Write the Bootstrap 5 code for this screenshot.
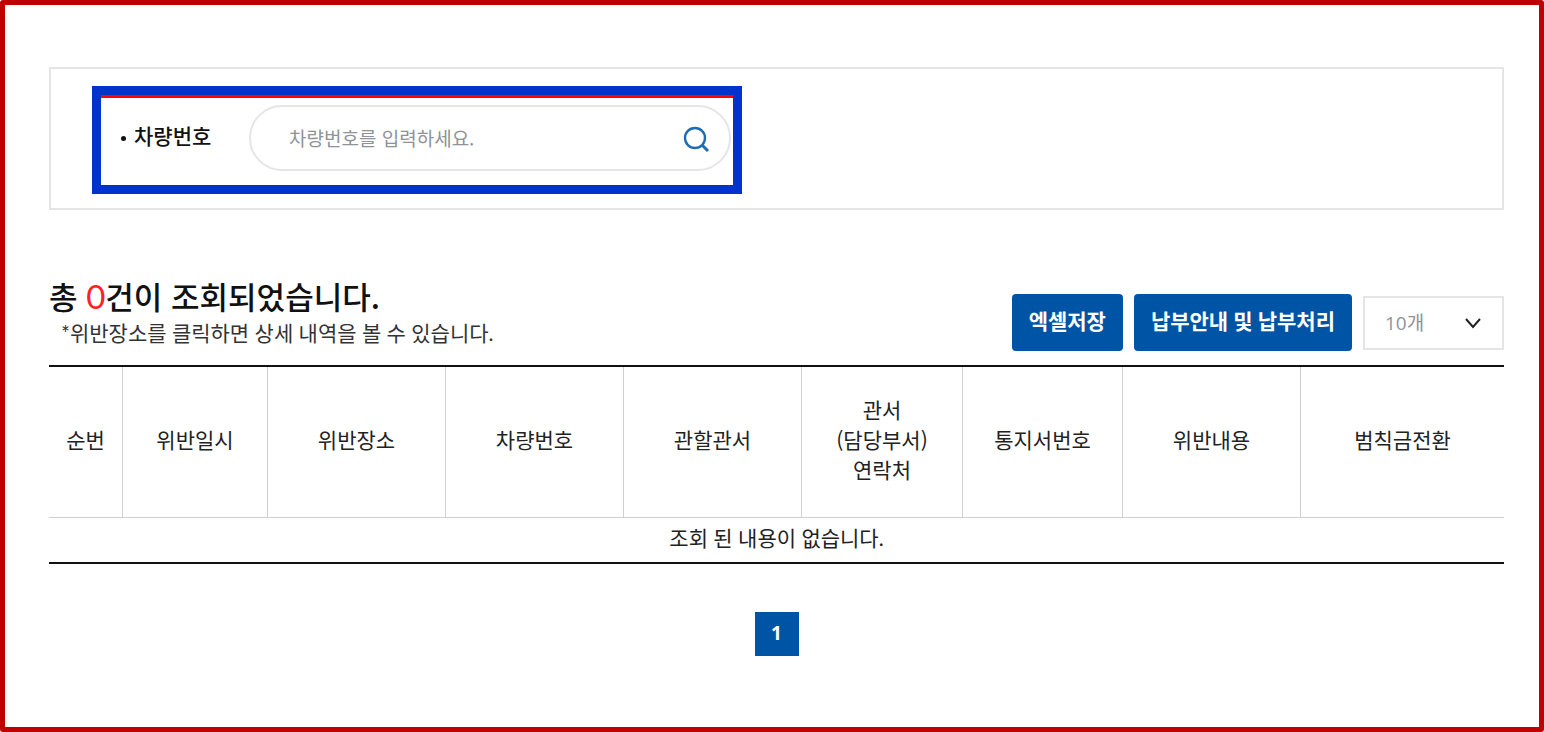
<!DOCTYPE html>
<html lang="ko">
<head>
<meta charset="utf-8">
<meta name="viewport" content="width=device-width, initial-scale=1">
<title>차량번호 조회</title>
<link href="https://cdn.jsdelivr.net/npm/bootstrap@5.3.0/dist/css/bootstrap.min.css" rel="stylesheet">
<style>
  body { font-family: "Noto Sans CJK KR", sans-serif; font-size: 21px; line-height: 30px; color: #222; }
  .page-frame { border: 5px solid #c00000; border-radius: 3px; padding: 62px 35px 40px 44px; }
  .search-panel { border: 2px solid #e5e5e5; padding: 17px 41px 14px; }
  .search-focus { border: 9px solid #0033cc; width: 650px; max-width: 100%; }
  .search-form { border-top: 3px solid #f00; padding: 7px 2px 14px 19px; }
  .search-label { width: 129px; font-weight: 500; color: #111; padding-bottom: 6px; }
  .dot { width: 5px; height: 5px; margin: 6px 8px 0 1px; background: #111; }
  .search-pill { border: 2px solid #e5e5e5; height: 66px; padding: 0 19px 0 38px; }
  .search-pill .form-control { font-size: 19px; color: #333; }
  .search-pill .form-control::placeholder { color: #8f9297; opacity: 1; }
  .search-pill svg { width: 28px; height: 28px; }
  .result-bar { margin-top: 66px; padding-bottom: 14px; }
  .result-text { padding-bottom: 1px; }
  .result-title { font-size: 31px; line-height: 40px; color: #111; }
  .result-count { font-family: Lato, sans-serif; font-size: 33px; line-height: 40px; font-weight: 400; color: #f22; }
  .result-note { font-family: Lato, "Noto Sans CJK KR", sans-serif; padding-left: 12px; line-height: 34px; color: #333; }
  .btn-main { --bs-btn-color: #fff; --bs-btn-bg: #0054a6; --bs-btn-hover-color: #fff; --bs-btn-hover-bg: #00468c;
    --bs-btn-font-family: Lato, "Noto Sans CJK KR", sans-serif;
    --bs-btn-border-width: 0; --bs-btn-border-radius: 4px; --bs-btn-font-size: 21px; --bs-btn-font-weight: 700;
    --bs-btn-padding-x: 17px; --bs-btn-padding-y: 0; height: 57px; padding-bottom: 4px; }
  .actions { gap: 11px; }
  .count-select { width: 141px; height: 54px; border: 2px solid #e5e5e5; font-family: "Open Sans", "Noto Sans CJK KR", sans-serif;
    font-size: 19px; line-height: 26px; color: #8f9297; padding: 0 40px 0 20px;
    background-image: url("data:image/svg+xml,%3csvg xmlns='http://www.w3.org/2000/svg' viewBox='0 0 18 18'%3e%3cpath fill='none' stroke='%23222' stroke-width='2' d='M2 5l7 8 7-8'/%3e%3c/svg%3e");
    background-size: 18px 18px; background-position: right 20px center; }
  .result-table { table-layout: fixed; min-width: 1100px; border-top: 2px solid #111; border-bottom: 2px solid #111;
    border-collapse: separate; border-spacing: 0; --bs-table-color: #222; --bs-table-bg: transparent; }
  .result-table > thead > tr > th { font-weight: 400; height: 151px; padding: 0 4px 6px; vertical-align: middle; border-bottom: 1px solid #d0d0d0; }
  .result-table > thead > tr > th + th { border-left: 1px solid #d0d0d0; }
  .result-table > tbody > tr > td { font-family: Lato, "Noto Sans CJK KR", sans-serif; height: 44px; padding: 0 4px 4px; border: 0; }
  .w-no { width: 73px; } .w-date { width: 145px; } .w-std { width: 178px; } .w-dept { width: 161px; }
  .w-notice { width: 160px; } .w-last { width: 204px; }
  .pages { margin-top: 48px; --bs-pagination-border-radius: 0; --bs-pagination-active-bg: #0054a6; }
  .pages .page-link { width: 44px; height: 44px; padding: 0 0 2px; border: 0; font-family: "Open Sans", sans-serif; font-size: 19px; font-weight: 700; }
</style>
</head>
<body>
<main class="page-frame min-vh-100">
  <section class="search-panel">
    <div class="search-focus">
      <form class="search-form d-flex align-items-center">
        <label class="search-label d-flex align-items-center flex-shrink-0" for="carNumber"><span class="dot rounded-circle"></span>차량번호</label>
        <div class="search-pill d-flex align-items-center flex-grow-1 rounded-pill">
          <input class="form-control border-0 bg-transparent shadow-none p-0" type="text" id="carNumber" placeholder="차량번호를 입력하세요.">
          <button class="btn border-0 p-0 d-flex" type="button" aria-label="검색">
            <svg viewBox="0 0 28 28" fill="none" stroke="#1f6cb5" stroke-width="2.4"><circle cx="13" cy="14" r="10"/><path d="M20 21l6 6" stroke-width="3"/></svg>
          </button>
        </div>
      </form>
    </div>
  </section>

  <section>
    <div class="result-bar d-flex flex-wrap justify-content-between align-items-end">
      <div class="result-text">
        <h1 class="result-title fw-medium mb-0">총 <span class="result-count">0</span>건이 조회되었습니다.</h1>
        <p class="result-note mb-0">*위반장소를 클릭하면 상세 내역을 볼 수 있습니다.</p>
      </div>
      <div class="actions d-flex align-items-center">
        <button class="btn btn-main" type="button">엑셀저장</button>
        <button class="btn btn-main" type="button">납부안내 및 납부처리</button>
        <select class="form-select count-select rounded-0" aria-label="목록 개수"><option>10개</option><option>20개</option><option>50개</option></select>
      </div>
    </div>
    <div class="table-responsive">
      <table class="table result-table text-center align-middle mb-0">
        <colgroup><col class="w-no"><col class="w-date"><col class="w-std"><col class="w-std"><col class="w-std"><col class="w-dept"><col class="w-notice"><col class="w-std"><col class="w-last"></colgroup>
        <thead>
          <tr><th scope="col">순번</th><th scope="col">위반일시</th><th scope="col">위반장소</th><th scope="col">차량번호</th><th scope="col">관할관서</th><th scope="col">관서<br>(담당부서)<br>연락처</th><th scope="col">통지서번호</th><th scope="col">위반내용</th><th scope="col">범칙금전환</th></tr>
        </thead>
        <tbody><tr><td colspan="9">조회 된 내용이 없습니다.</td></tr></tbody>
      </table>
    </div>
    <nav aria-label="페이지">
      <ul class="pagination pages justify-content-center mb-0">
        <li class="page-item active" aria-current="page"><a class="page-link d-flex align-items-center justify-content-center" href="#">1</a></li>
      </ul>
    </nav>
  </section>
</main>
<script src="https://cdn.jsdelivr.net/npm/bootstrap@5.3.0/dist/js/bootstrap.bundle.min.js"></script>
</body>
</html>
